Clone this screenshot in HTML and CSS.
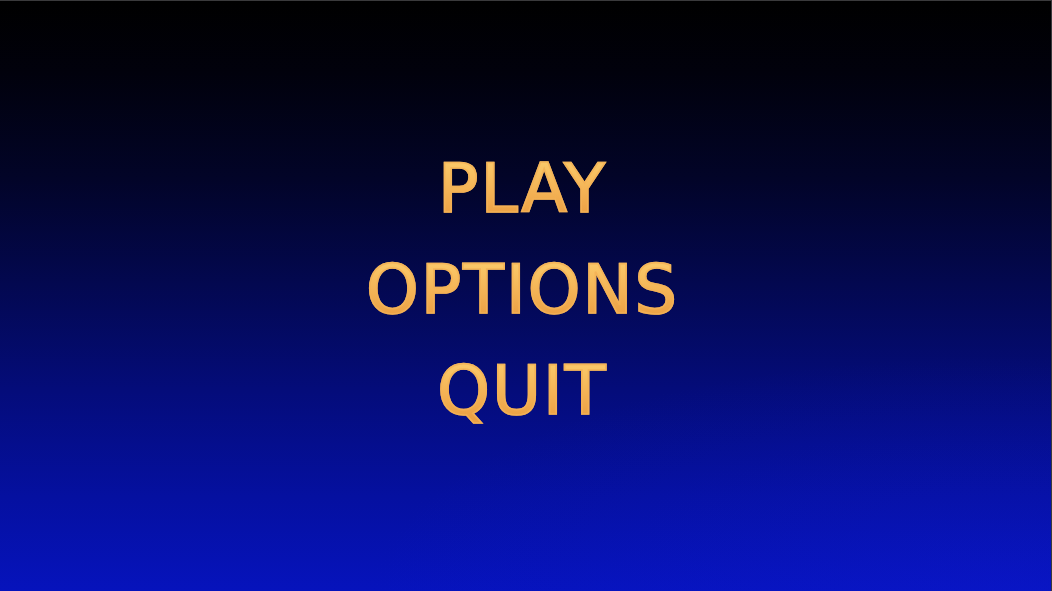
FILE: index.html
```html
<!DOCTYPE html>
<html lang="en">
<head>
<meta charset="utf-8">
<title>Main Menu</title>
<link rel="stylesheet" href="styles.css">
</head>
<body>
<main class="screen">
  <nav class="menu">
    <span class="menu-item">PLAY</span>
    <span class="menu-item">OPTIONS</span>
    <span class="menu-item">QUIT</span>
  </nav>
</main>
</body>
</html>
```
FILE: styles.css
```css
html, body {
  margin: 0;
  padding: 0;
  height: 100%;
}

body {
  background: #000;
}

.screen {
  box-sizing: border-box;
  width: 100%;
  height: 100vh;
  border-top: 1px solid #3a3a3c;
  border-right: 1px solid #3a3a3c;
  background:
    radial-gradient(ellipse 60% 40% at 95% 100%, rgba(20, 30, 230, 0.22), rgba(20, 30, 230, 0) 100%),
    linear-gradient(to bottom, #000000 0%, #01010c 12%, #020428 30%, #030850 48%, #040c7a 66%, #0510a0 84%, #0613bc 100%);
  display: flex;
  align-items: center;
  justify-content: center;
}

.menu {
  display: flex;
  flex-direction: column;
  align-items: center;
  margin-bottom: 12px;
  margin-right: 6px;
}

.menu-item {
  display: inline-block;
  font-family: "DejaVu Sans", "Verdana", sans-serif;
  font-size: 67px;
  line-height: 101px;
  letter-spacing: 2px;
  -webkit-text-stroke: 1.7px rgba(243, 178, 86, 0.85);
  background: linear-gradient(to bottom, #fac868 24%, #f4b456 50%, #eba044 76%);
  -webkit-background-clip: text;
  background-clip: text;
  color: transparent;
}
```
